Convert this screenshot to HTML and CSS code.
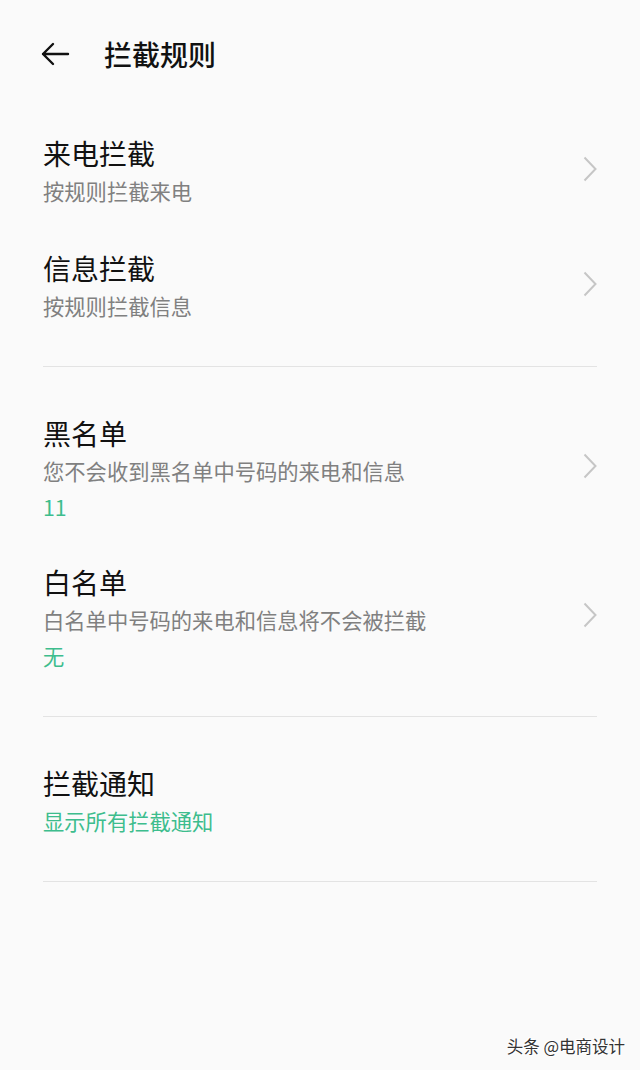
FILE: index.html
```html
<!DOCTYPE html>
<html lang="zh-CN">
<head>
    <meta charset="UTF-8">
    <meta name="viewport" content="width=device-width, initial-scale=1.0">
    <title>拦截规则</title>
    <link rel="stylesheet" href="styles.css">
</head>
<body>
    <div class="page">
        <header class="top-bar">
            <svg class="back-icon" width="30" height="24" viewBox="0 0 30 24">
                <path d="M28 12H3M13 2L3 12l10 10" fill="none" stroke="#111" stroke-width="2.4" stroke-linecap="round" stroke-linejoin="round"/>
            </svg>
            <h1 class="page-title">拦截规则</h1>
        </header>

        <section class="group first">
            <div class="item">
                <div class="item-text">
                    <div class="item-title">来电拦截</div>
                    <div class="item-sub">按规则拦截来电</div>
                </div>
                <svg class="chevron" width="14" height="26" viewBox="0 0 14 26"><path d="M1.5 1.5L12.5 13L1.5 24.5" fill="none" stroke="#c6c6c6" stroke-width="2"/></svg>
            </div>
            <div class="item">
                <div class="item-text">
                    <div class="item-title">信息拦截</div>
                    <div class="item-sub">按规则拦截信息</div>
                </div>
                <svg class="chevron" width="14" height="26" viewBox="0 0 14 26"><path d="M1.5 1.5L12.5 13L1.5 24.5" fill="none" stroke="#c6c6c6" stroke-width="2"/></svg>
            </div>
        </section>

        <section class="group">
            <div class="item">
                <div class="item-text">
                    <div class="item-title">黑名单</div>
                    <div class="item-sub">您不会收到黑名单中号码的来电和信息</div>
                    <div class="item-value">11</div>
                </div>
                <svg class="chevron" width="14" height="26" viewBox="0 0 14 26"><path d="M1.5 1.5L12.5 13L1.5 24.5" fill="none" stroke="#c6c6c6" stroke-width="2"/></svg>
            </div>
            <div class="item">
                <div class="item-text">
                    <div class="item-title">白名单</div>
                    <div class="item-sub">白名单中号码的来电和信息将不会被拦截</div>
                    <div class="item-value">无</div>
                </div>
                <svg class="chevron" width="14" height="26" viewBox="0 0 14 26"><path d="M1.5 1.5L12.5 13L1.5 24.5" fill="none" stroke="#c6c6c6" stroke-width="2"/></svg>
            </div>
        </section>

        <section class="group last">
            <div class="item">
                <div class="item-text">
                    <div class="item-title">拦截通知</div>
                    <div class="item-sub green">显示所有拦截通知</div>
                </div>
            </div>
        </section>

        <div class="watermark">头条 @电商设计</div>
    </div>
</body>
</html>
```

FILE: styles.css
```css
html, body {
    margin: 0;
    padding: 0;
}
body {
    font-family: "Noto Sans CJK SC", "Noto Sans", sans-serif;
    background-color: #fafafa;
    color: #111;
}
.page {
    position: relative;
    width: 640px;
    height: 1070px;
    overflow: hidden;
}
.top-bar {
    height: 108px;
    display: flex;
    align-items: center;
    padding-left: 40px;
}
.back-icon {
    display: block;
    margin-right: 34px;
}
.page-title {
    margin: 0;
    font-size: 28px;
    font-weight: 500;
    line-height: 38px;
    color: #111;
}
.group {
    margin: 0 43px;
    padding: 28px 0 23px;
    border-bottom: 1px solid #e3e3e3;
}
.group.first {
    padding-top: 7px;
    padding-bottom: 21px;
}
.group.last {
    padding-bottom: 21px;
}
.item {
    display: flex;
    align-items: center;
    justify-content: space-between;
    padding: 19px 0 20px;
}
.item-title {
    font-size: 28px;
    line-height: 38px;
    color: #111;
}
.item-sub {
    font-size: 21.3px;
    line-height: 38px;
    color: #808080;
}
.item-value {
    font-size: 21.3px;
    line-height: 34px;
    color: #3dbd8d;
}
.item-sub.green {
    color: #3dbd8d;
}
.chevron {
    display: block;
    margin-bottom: 7px;
}
.watermark {
    position: absolute;
    right: 15px;
    bottom: 12px;
    font-size: 16.5px;
    color: #333;
    text-shadow: 1px 1px 1px #fff, -1px -1px 1px #fff;
}
```
